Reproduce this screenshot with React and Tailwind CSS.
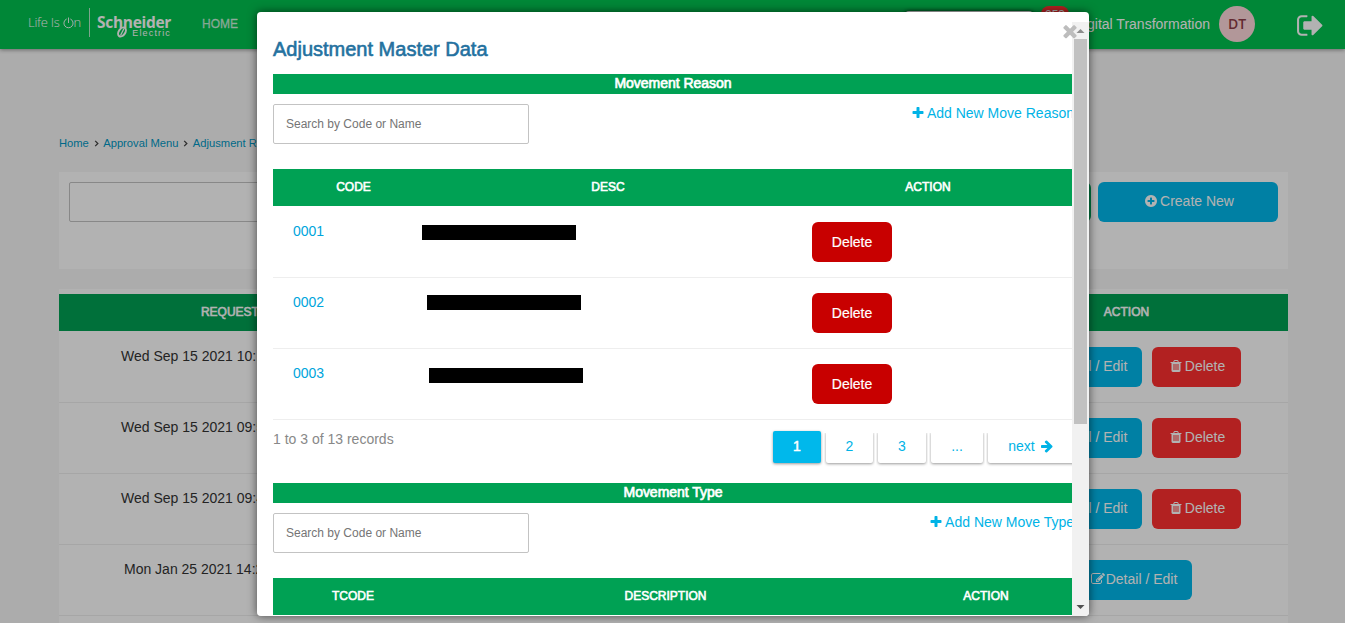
const ICONS = {
  times:
    "M1490 1322q0 40-28 68l-136 136q-28 28-68 28t-68-28l-294-294-294 294q-28 28-68 28t-68-28l-136-136q-28-28-28-68t28-68l294-294-294-294q-28-28-28-68t28-68l136-136q28-28 68-28t68 28l294 294 294-294q28-28 68-28t68 28l136 136q28 28 28 68t-28 68l-294 294 294 294q28 28 28 68z",
  plus:
    "M1600 736v192q0 40-28 68t-68 28h-416v416q0 40-28 68t-68 28h-192q-40 0-68-28t-28-68v-416h-416q-40 0-68-28t-28-68v-192q0-40 28-68t68-28h416v-416q0-40 28-68t68-28h192q40 0 68 28t28 68v416h416q40 0 68 28t28 68z",
  plusCircle:
    "M1344 960v-128q0-26-19-45t-45-19h-256v-256q0-26-19-45t-45-19h-128q-26 0-45 19t-19 45v256h-256q-26 0-45 19t-19 45v128q0 26 19 45t45 19h256v256q0 26 19 45t45 19h128q26 0 45-19t19-45v-256h256q26 0 45-19t19-45zm320-64q0 209-103 385.5t-279.5 279.5-385.5 103-385.5-103-279.5-279.5-103-385.5 103-385.5 279.5-279.5 385.5-103 385.5 103 279.5 279.5 103 385.5z",
  trash:
    "M704 1376v-704q0-14-9-23t-23-9h-64q-14 0-23 9t-9 23v704q0 14 9 23t23 9h64q14 0 23-9t9-23zm256 0v-704q0-14-9-23t-23-9h-64q-14 0-23 9t-9 23v704q0 14 9 23t23 9h64q14 0 23-9t9-23zm256 0v-704q0-14-9-23t-23-9h-64q-14 0-23 9t-9 23v704q0 14 9 23t23 9h64q14 0 23-9t9-23zm-544-992h448l-48-117q-7-9-17-11h-317q-10 2-17 11zm928 32v64q0 14-9 23t-23 9h-96v948q0 83-47 143.5t-113 60.5h-832q-66 0-113-58.5t-47-141.5v-952h-96q-14 0-23-9t-9-23v-64q0-14 9-23t23-9h309l70-167q15-37 54-63t79-26h320q40 0 79 26t54 63l70 167h309q14 0 23 9t9 23z",
  edit:
    "M888 1184l116-116-152-152-116 116v56h96v96h56zm440-720q-16-16-33 1l-350 350q-17 17-1 33t33-1l350-350q17-17 1-33zm80 594v190q0 119-84.5 203.5t-203.5 84.5h-832q-119 0-203.5-84.5t-84.5-203.5v-832q0-119 84.5-203.5t203.5-84.5h832q63 0 117 25 15 7 18 23 3 17-9 29l-49 49q-14 14-32 8-23-6-45-6h-832q-66 0-113 47t-47 113v832q0 66 47 113t113 47h832q66 0 113-47t47-113v-126q0-13 9-22l64-64q15-15 35-7t20 29zm-96-738l288 288-672 672h-288v-288zm444 132l-92 92-288-288 92-92q28-28 68-28t68 28l152 152q28 28 28 68t-28 68z",
  arrow:
    "M1600 960q0 54-37 91l-651 651q-39 37-91 37-51 0-90-37l-75-75q-38-38-38-91t38-91l293-293h-704q-52 0-84.5-37.5t-32.5-90.5v-128q0-53 32.5-90.5t84.5-37.5h704l-293-294q-38-36-38-90t38-90l75-75q38-38 90-38 53 0 91 38l651 651q37 35 37 90z",
  signOut:
    "M704 1440q0 4 1 20t.5 26.5-3 23.5-10 19.5-20.5 6.5h-320q-119 0-203.5-84.5t-84.5-203.5v-704q0-119 84.5-203.5t203.5-84.5h320q13 0 22.5 9.5t9.5 22.5q0 4 1 20t.5 26.5-3 23.5-10 19.5-20.5 6.5h-320q-66 0-113 47t-47 113v704q0 66 47 113t113 47h312l11.5 1 11.5 3 8 5.5 7 9 2 13.5zm928-544q0 26-19 45l-544 544q-19 19-45 19t-45-19-19-45v-288h-448q-26 0-45-19t-19-45v-384q0-26 19-45t45-19h448v-288q0-26 19-45t45-19 45 19l544 544q19 19 19 45z",
};

function Icon({ name, className }) {
  return (
    <svg viewBox="0 0 1792 1792" fill="currentColor" className={"shrink-0 " + className}>
      <path d={ICONS[name]} />
    </svg>
  );
}

function Logo() {
  return (
    <div className="flex h-[49px] w-[144px] shrink-0 text-white">
      <div className="mt-2 flex h-[29px] w-[62px] items-center whitespace-nowrap border-r border-white/70 font-['Open_Sans',sans-serif] text-[13px] font-light tracking-[-0.25px]">
        <span>Life Is</span>
        <svg viewBox="0 0 12 12" className="ml-[3px] h-[12px] w-[11px] shrink-0" fill="none" stroke="currentColor" strokeWidth="1">
          <path d="M4 1.6a5 5 0 1 0 4 0M6 0v6" />
        </svg>
        <span>n</span>
      </div>
      <div className="ml-[7px] flex w-[75px] flex-col pt-[15px]">
        <div className="h-[14px] whitespace-nowrap font-['Open_Sans',sans-serif] text-[15.5px] font-bold leading-[14px] tracking-[-0.3px]">
          Schneider
        </div>
        <div className="flex h-[9px] items-start justify-end">
          <svg viewBox="0 0 12 12" className="-mt-[3px] mr-[4px] h-[12px] w-[12px]" fill="none" stroke="currentColor">
            <ellipse cx="6" cy="6" rx="3.2" ry="5" transform="rotate(35 6 6)" strokeWidth="2" />
            <path d="M8 2.5L4.5 9.5" strokeWidth="1.2" />
          </svg>
          <span className="mr-[1px] text-[9px] leading-[9px] tracking-[1.15px]">Electric</span>
        </div>
      </div>
    </div>
  );
}

function Header() {
  return (
    <header className="flex h-[49px] w-full shrink-0 bg-[#00c250] pl-7 text-sm text-white shadow-[0_1px_4px_rgba(0,0,0,0.4)]">
      <Logo />
      <div className="ml-[30px] flex h-[49px] items-center text-[12px] text-white/70 [-webkit-text-stroke:0.3px]">HOME</div>
      <div className="ml-auto flex">
        <div className="mt-[11px] h-6 w-32 rounded bg-white shadow-[0_0_4px_rgba(0,0,0,0.7)]" />
        <div className="ml-2 mt-[6px] h-[18px] w-7 rounded-lg bg-[#ff3030] text-center text-[12px] leading-[18px]">253</div>
        <div className="ml-2 flex h-[47px] w-[133px] items-center justify-end whitespace-nowrap">Digital Transformation</div>
        <div className="ml-[9px] mt-[6px] flex h-9 w-9 items-center justify-center rounded-full bg-[#ffd9dc] font-['Open_Sans',sans-serif] text-[14px] font-semibold text-[#8f3d48]">
          DT
        </div>
        <Icon name="signOut" className="ml-[41px] mr-5 mt-[11px] h-[29px] w-[29px]" />
      </div>
    </header>
  );
}

const BTN = "flex h-10 items-center justify-center rounded-md text-sm text-white whitespace-nowrap";

function Actions({ deletable }) {
  return (
    <div className={"flex justify-end gap-[10px] pt-[15px] " + (deletable ? "pr-[47px]" : "pr-[96px]")}>
      <div className={BTN + " w-[117px] bg-[#00b8eb] pb-[2px] pl-px"}>
        <Icon name="edit" className="mr-[1px] h-[14px] w-[14px]" />
        Detail / Edit
      </div>
      {deletable && (
        <div className={BTN + " w-[89px] bg-[#ff3030] pb-[2px] pl-px"}>
          <Icon name="trash" className="mr-[2px] h-[14px] w-[14px]" />
          Delete
        </div>
      )}
    </div>
  );
}

const REQUESTS = [
  { date: "Wed Sep 15 2021 10:12:45", pad: "pl-[62px]", deletable: true },
  { date: "Wed Sep 15 2021 09:58:31", pad: "pl-[62px]", deletable: true },
  { date: "Wed Sep 15 2021 09:41:07", pad: "pl-[62px]", deletable: true },
  { date: "Mon Jan 25 2021 14:20:16", pad: "pl-[65px]", deletable: false },
];

function Crumb() {
  return (
    <svg viewBox="0 0 5 8" className="mx-[4.7px] h-[7px] w-[5px]" fill="none" stroke="#444" strokeWidth="1.5">
      <path d="M1 1l3 3-3 3" />
    </svg>
  );
}

const HEAD = "grid h-[37px] items-center bg-[#00a154] pb-[2px] text-center text-[12px] text-white [-webkit-text-stroke:0.6px]";

function Page() {
  return (
    <div className="flex h-[623px] flex-col overflow-hidden bg-[#f7f7f7]">
      <Header />
      <main className="ml-[59px] flex w-[1229px] flex-col pt-[86px]">
        <nav className="flex h-4 items-center text-[11.2px] text-[#0097c4]">
          <span>Home</span>
          <Crumb />
          <span>Approval Menu</span>
          <Crumb />
          <span>Adjusment Request</span>
        </nav>
        <section className="mt-[21px] flex h-[97px] bg-white p-[10px]">
          <div className="h-10 w-[720px] rounded-[2px] border border-[#c3c3c3]" />
          <div className={BTN + " ml-auto w-[180px] bg-[#00a859]"}>Master Data</div>
          <div className={BTN + " ml-[7px] w-[180px] bg-[#00b8eb] pb-[2px] pl-[2px]"}>
            <Icon name="plusCircle" className="mr-[2px] h-[14px] w-[14px]" />
            Create New
          </div>
        </section>
        <section className="mt-5 flex flex-col bg-white pt-[5px]">
          <div className={HEAD + " grid-cols-[376px_1fr_323px]"}>
            <span>REQUEST DATE</span>
            <span>STATUS</span>
            <span>ACTION</span>
          </div>
          {REQUESTS.map((r, i) => (
            <div
              key={r.date}
              className={"grid grid-cols-[390px_1fr_323px] border-b border-[#eee] " + (i === 0 ? "h-[72px] pt-px" : "h-[71px]")}
            >
              <span className={"pt-[14px] text-sm text-[#333] " + r.pad}>{r.date}</span>
              <span />
              <Actions deletable={r.deletable} />
            </div>
          ))}
          <div className="h-10" />
        </section>
      </main>
    </div>
  );
}

function SectionTop({ title, addLabel }) {
  return (
    <>
      <div className="h-5 bg-[#00a154] pr-px text-center text-sm leading-[19px] tracking-[-0.03px] text-white [-webkit-text-stroke:0.7px]">
        {title}
      </div>
      <div className="mt-[10px] flex h-10 items-start justify-between">
        <input
          placeholder="Search by Code or Name"
          className="h-10 w-64 rounded-[2px] border border-[#c3c3c3] px-3 text-[12px] placeholder:text-[#757575]"
        />
        <div className="flex h-[18px] items-center whitespace-nowrap text-sm text-[#00b3e6]">
          <Icon name="plus" className="mr-[2px] h-[14px] w-[14px]" />
          {addLabel}
        </div>
      </div>
    </>
  );
}

const REASONS = [
  { code: "0001", bar: "mt-[18px]" },
  { code: "0002", bar: "ml-[5px] mt-[17px]" },
  { code: "0003", bar: "ml-[7px] mt-[19px]" },
];

const PAGE = "flex h-8 items-center justify-center rounded-[2px] pb-[2px] text-sm shadow-[0_1px_3px_rgba(0,0,0,0.4)]";
const PAGE_OFF = " bg-white text-[#00b3e6] [clip-path:inset(2px_-2px_-4px_-2px)]";

function Modal() {
  return (
    <div className="relative flex h-[604px] w-[832px] overflow-hidden rounded bg-white">
      <div className="w-[815px] overflow-hidden pl-4 pt-6">
        <div className="w-[801px]">
          <h1 className="h-[38px] text-[20px] leading-[26px] text-[#24719f] [-webkit-text-stroke:0.6px]">Adjustment Master Data</h1>
          <SectionTop title="Movement Reason" addLabel="Add New Move Reason" />
          <div className={HEAD + " mt-[25px] grid-cols-[161px_348px_1fr]"}>
            <span>CODE</span>
            <span>DESC</span>
            <span>ACTION</span>
          </div>
          {REASONS.map((r, i) => (
            <div
              key={r.code}
              className={"grid grid-cols-[149px_390px_1fr] items-start border-b border-[#eee] " + (i === 0 ? "h-[72px] pt-px" : "h-[71px]")}
            >
              <span className="pl-5 pt-[14px] text-sm text-[#00a5dc]">{r.code}</span>
              <div className={"h-[15px] w-[154px] bg-black " + r.bar} />
              <div className={BTN + " mt-[15px] w-20 bg-[#c80000] [-webkit-text-stroke:0.2px]"}>Delete</div>
            </div>
          ))}
          <div className="flex h-[63px] items-start justify-between pt-[11px]">
            <span className="-mt-[2px] text-sm text-[#888]">1 to 3 of 13 records</span>
            <div className="-mr-[5px] flex gap-[5px]">
              <div className={PAGE + " w-12 bg-[#00b8eb] text-white [-webkit-text-stroke:0.5px]"}>1</div>
              <div className={PAGE + PAGE_OFF + " w-[47px]"}>2</div>
              <div className={PAGE + PAGE_OFF + " w-12"}>3</div>
              <div className={PAGE + PAGE_OFF + " w-[52px]"}>...</div>
              <div className={PAGE + PAGE_OFF + " w-[91px] gap-[5px] pr-[5px]"}>
                next
                <Icon name="arrow" className="h-[14px] w-[14px]" />
              </div>
            </div>
          </div>
          <SectionTop title="Movement Type" addLabel="Add New Move Type" />
          <div className={HEAD + " mt-[25px] grid-cols-[160px_465px_1fr]"}>
            <span>TCODE</span>
            <span>DESCRIPTION</span>
            <span>ACTION</span>
          </div>
          <div className="h-10 border-b border-[#eee]" />
        </div>
      </div>
      <div className="mt-[10px] flex w-[17px] flex-col items-center bg-[#f1f1f1]">
        <svg viewBox="0 0 17 17" className="h-[17px] w-[17px]" fill="#8c8c8c">
          <path d="M4.5 11h8l-4-4z" />
        </svg>
        <div className="h-[385px] w-[13px] bg-[#c1c1c1]" />
        <svg viewBox="0 0 17 17" className="mt-auto h-[17px] w-[17px]" fill="#505050">
          <path d="M4.5 6h8l-4 4z" />
        </svg>
      </div>
      <Icon name="times" className="absolute left-[803px] top-[9px] h-[20px] w-[20px] text-[#bdbdbd]" />
    </div>
  );
}

export default function App() {
  return (
    <div className="relative h-[623px] w-full overflow-hidden font-['Liberation_Sans',Arial,sans-serif]">
      <Page />
      <div className="absolute inset-0 bg-black/30 pl-[257px] pt-3">
        <div className="w-[832px] rounded shadow-[0_0_10px_rgba(0,0,0,0.6)]">
          <Modal />
        </div>
      </div>
    </div>
  );
}
